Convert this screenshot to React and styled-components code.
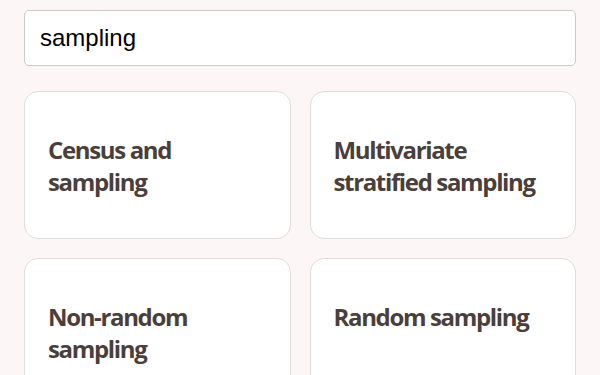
import styled, { createGlobalStyle } from 'styled-components'

const GlobalStyle = createGlobalStyle`
    html, body {
        margin: 0;
        padding: 0;
        background: #fdf6f6;
    }
    * {
        box-sizing: border-box;
    }
`

const Page = styled.div`
    padding: 10px 24px 24px;
    display: flex;
    flex-direction: column;
    gap: 25px;
`

const SearchInput = styled.input`
    width: 100%;
    height: 56px;
    padding: 0 15px;
    border: 1px solid #cfcaca;
    border-radius: 5px;
    background: #fff;
    font-family: "Liberation Sans", Arial, sans-serif;
    font-size: 24px;
    color: #000;
    outline: none;
`

const Grid = styled.div`
    display: grid;
    grid-template-columns: 1fr 1fr;
    gap: 19px;
`

const Card = styled.div`
    height: 148px;
    padding: 42px 23px;
    background: #fff;
    border: 1px solid #e2dcdc;
    border-radius: 14px;
`

const Title = styled.h3`
    margin: 0;
    font-family: "Open Sans", sans-serif;
    font-weight: 700;
    font-size: 24px;
    line-height: 32px;
    letter-spacing: -1.35px;
    color: #4a3f3b;
`

const results = [
    'Census and sampling',
    'Multivariate stratified sampling',
    'Non-random sampling',
    'Random sampling',
]

const App = () => {
    return (
        <>
            <GlobalStyle />
            <Page>
                <SearchInput defaultValue="sampling" />
                <Grid>
                    {results.map((r) => (
                        <Card key={r}>
                            <Title>{r}</Title>
                        </Card>
                    ))}
                </Grid>
            </Page>
        </>
    )
}

export default App
